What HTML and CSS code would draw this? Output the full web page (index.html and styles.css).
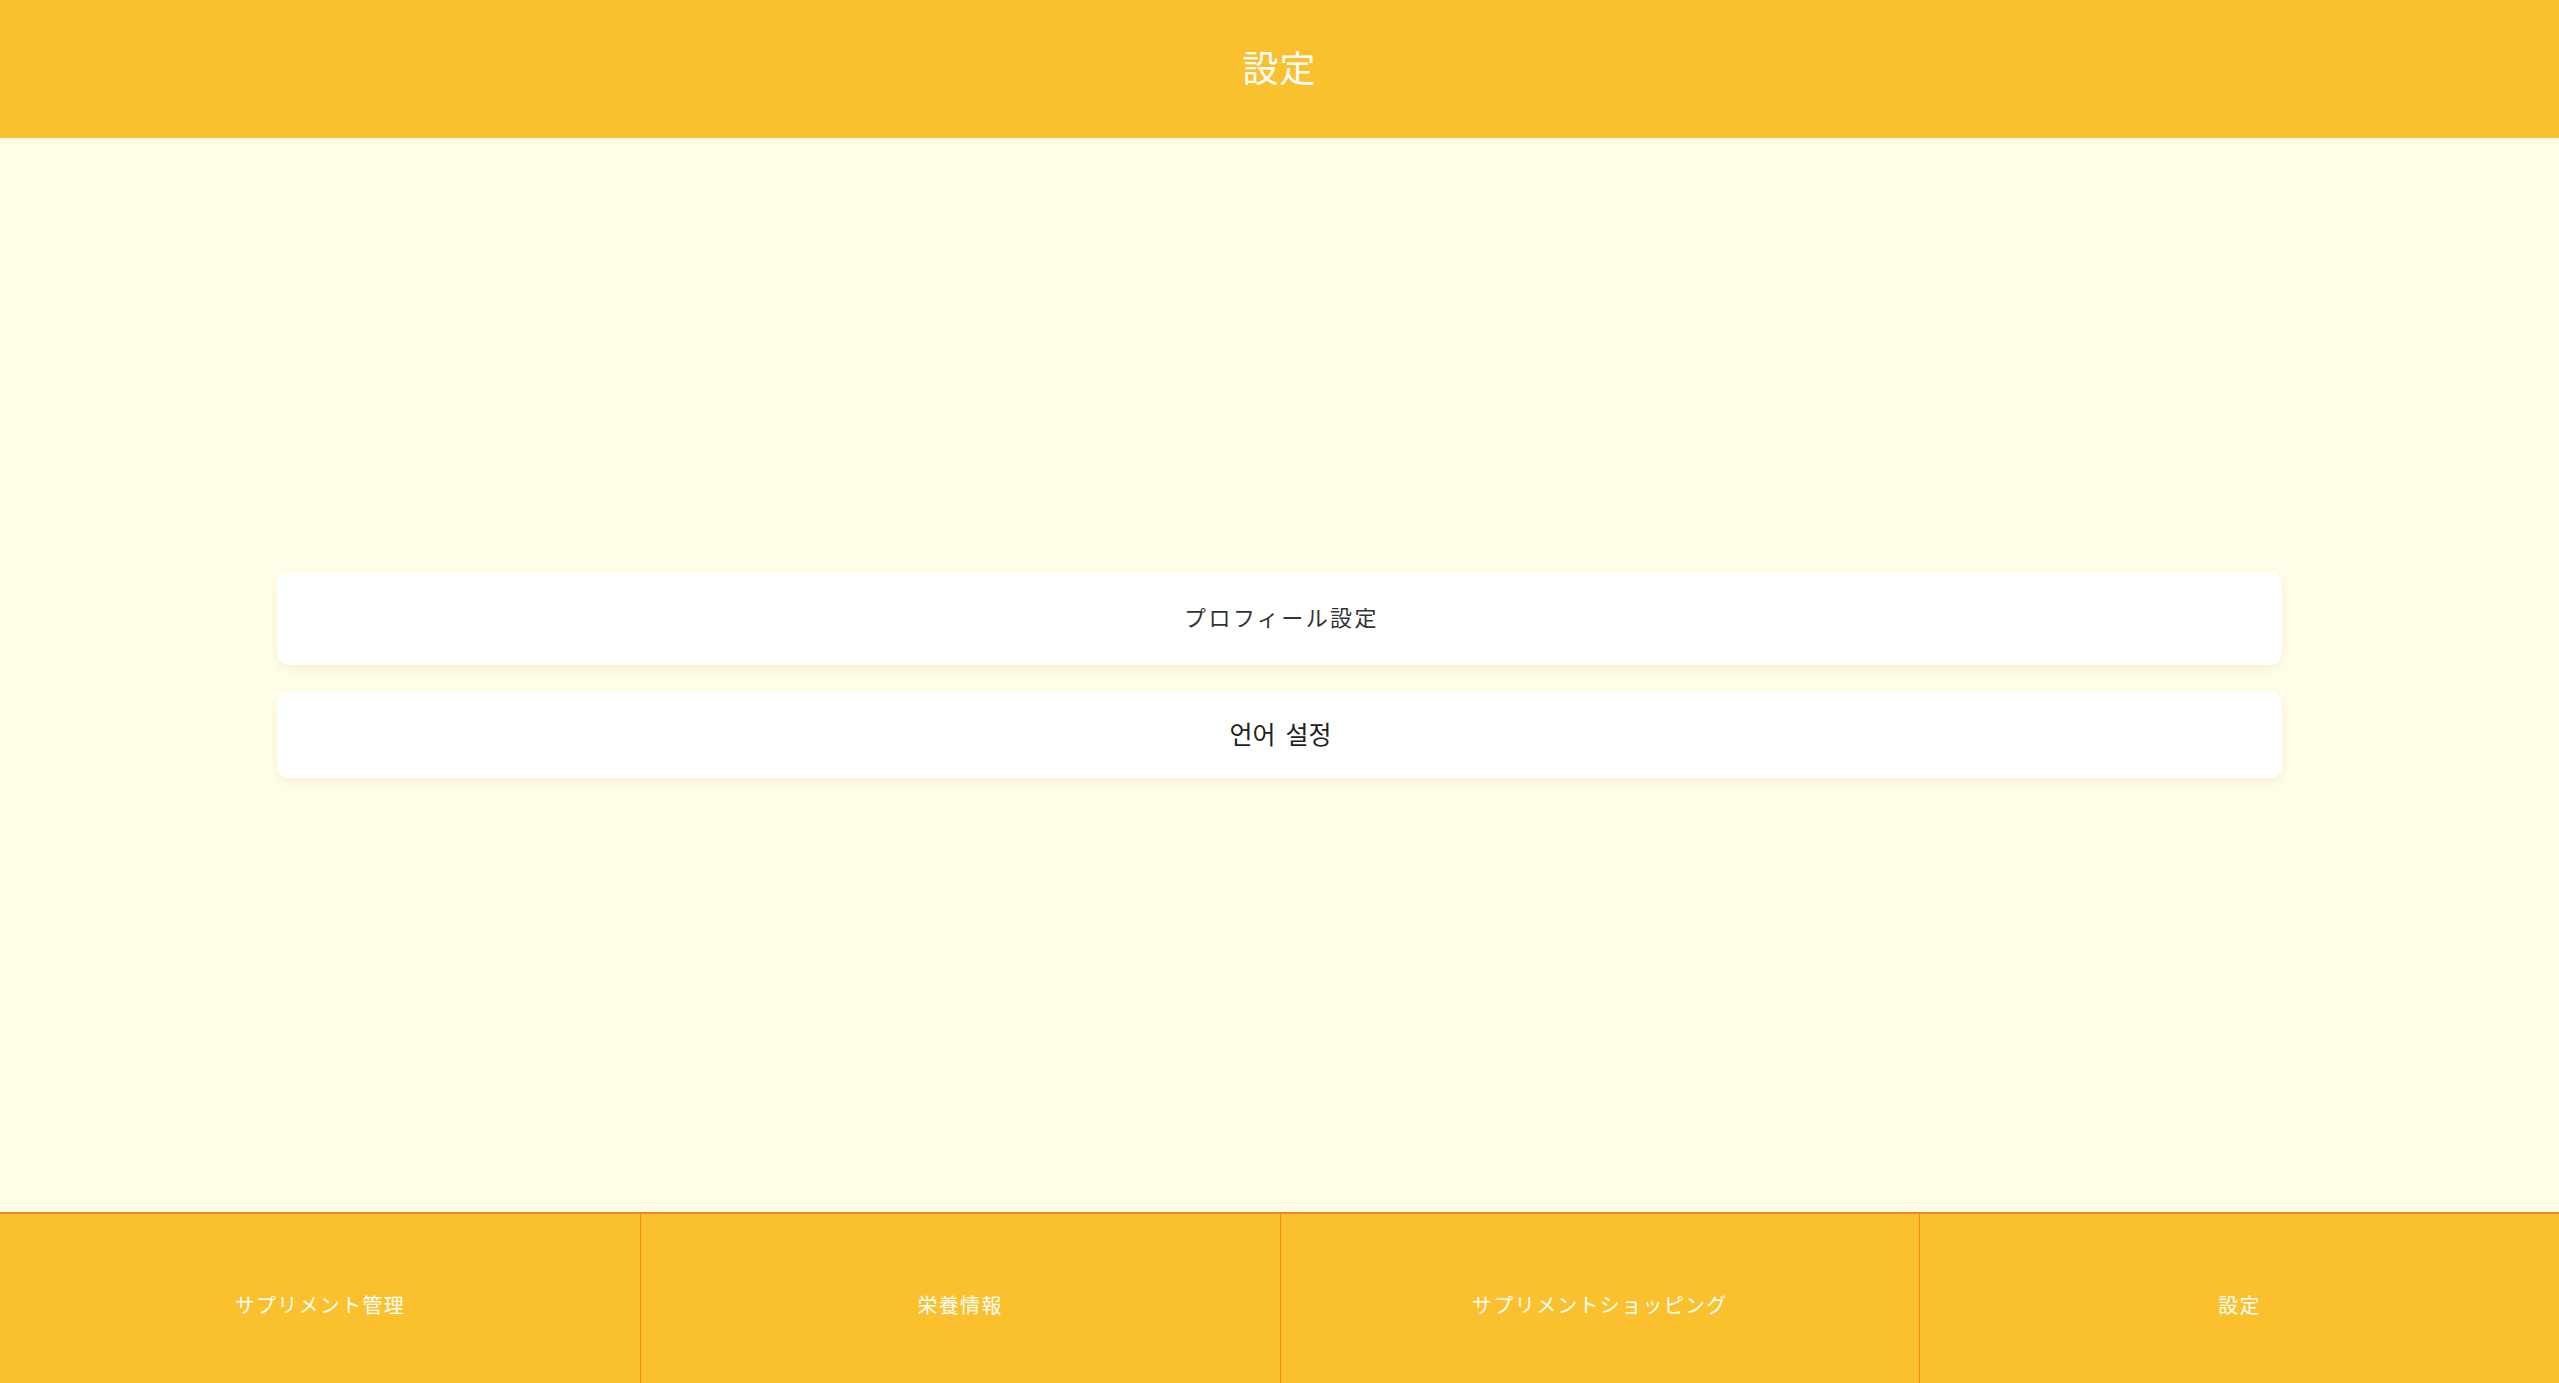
FILE: index.html
```html
<!DOCTYPE html>
<html lang="ja">
<head>
<meta charset="utf-8">
<title>設定</title>
<link rel="stylesheet" href="styles.css">
</head>
<body>
<div class="app">
  <header class="header">
    <h1 class="title">設定</h1>
  </header>
  <main class="main">
    <div class="list">
      <button class="card card-ja">プロフィール設定</button>
      <button class="card card-ko" lang="ko">언어 설정</button>
    </div>
  </main>
  <nav class="nav">
    <a class="nav-item">サプリメント管理</a>
    <a class="nav-item">栄養情報</a>
    <a class="nav-item">サプリメントショッピング</a>
    <a class="nav-item">設定</a>
  </nav>
</div>
</body>
</html>
```

FILE: styles.css
```css
html, body {
  margin: 0;
  padding: 0;
  height: 100%;
}
body {
  font-family: "Noto Sans CJK JP", "Noto Sans", sans-serif;
  background: #fffde7;
}
.app {
  display: flex;
  flex-direction: column;
  height: 100vh;
}
.header {
  height: 138px;
  flex: 0 0 138px;
  box-sizing: border-box;
  padding-bottom: 6px;
  background: #fbc02d;
  display: flex;
  align-items: center;
  justify-content: center;
}
.title {
  margin: 0;
  color: #ffffff;
  font-size: 36px;
  font-weight: 400;
  letter-spacing: 1px;
}
.main {
  flex: 1;
  display: flex;
  align-items: center;
  justify-content: center;
}
.list {
  width: 2005px;
  display: flex;
  flex-direction: column;
  gap: 27px;
}
.card {
  display: flex;
  align-items: center;
  justify-content: center;
  box-sizing: border-box;
  border: none;
  background: #ffffff;
  border-radius: 12px;
  box-shadow: 0 4px 10px rgba(180, 160, 60, 0.12);
  font-family: "Noto Sans CJK JP", "Noto Sans", sans-serif;
  cursor: pointer;
  padding: 0 0 5px 0;
}
.card-ja {
  height: 93px;
  padding-left: 4px;
  font-size: 22px;
  letter-spacing: 2.4px;
  color: #333333;
}
.card-ko {
  height: 86px;
  padding-bottom: 4px;
  padding-left: 2px;
  font-family: "Noto Sans CJK KR", "Noto Sans", sans-serif;
  font-size: 25px;
  word-spacing: 3px;
  color: #222222;
}
.nav {
  flex: 0 0 169px;
  height: 169px;
  background: #fbc02d;
  border-top: 2px solid #f5861f;
  display: grid;
  grid-template-columns: repeat(4, 1fr);
}
.nav-item {
  display: flex;
  align-items: center;
  justify-content: center;
  padding-top: 12px;
  color: #ffffff;
  font-size: 20px;
  letter-spacing: 1.3px;
  border-left: 1.5px solid #f5861f;
}
.nav-item:first-child {
  border-left: none;
}
```
